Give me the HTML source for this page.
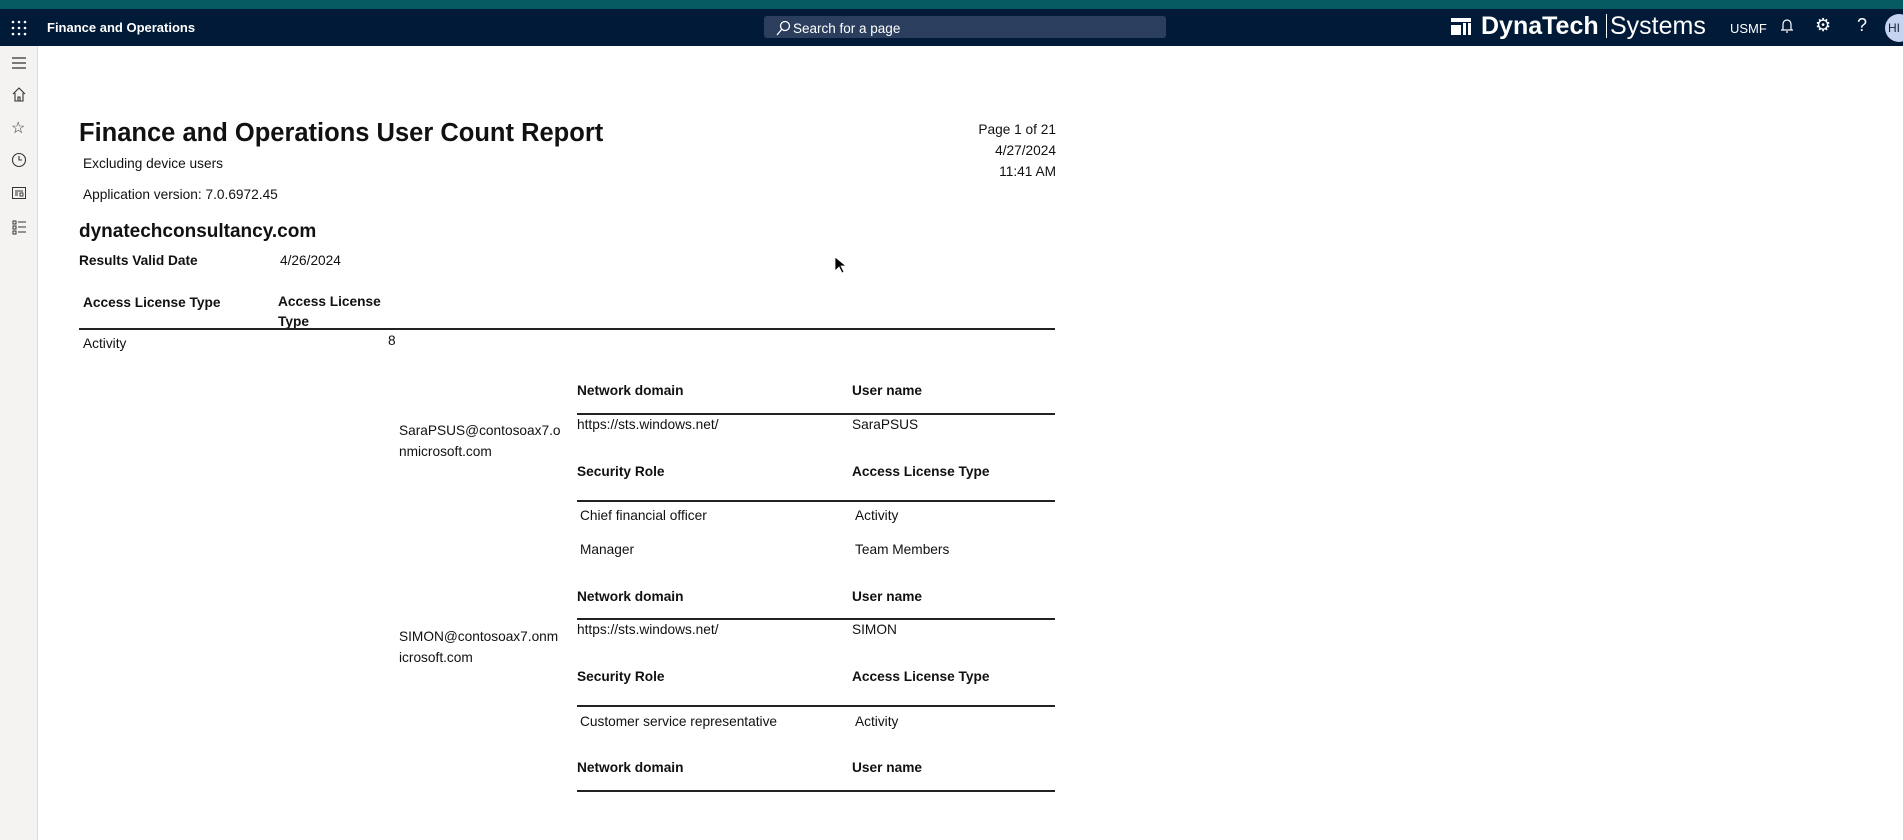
<!DOCTYPE html>
<html><head><meta charset="utf-8"><style>
*{margin:0;padding:0;box-sizing:border-box}
body{width:1903px;height:840px;overflow:hidden;background:#fff;font-family:"Liberation Sans",sans-serif;color:#111;position:relative}
.a{position:absolute;white-space:nowrap}
.t{font-size:13.7px}
.b{font-weight:bold;font-size:13.7px}
.ln{position:absolute;height:2px;background:#222}
.ic{position:absolute;left:11px;width:16px;height:16px}
</style></head><body>
<div class="a" style="left:0;top:0;width:1903px;height:9px;background:#065a61"></div>
<div class="a" style="left:0;top:9px;width:1903px;height:37px;background:#001a38"></div>
<svg class="a" style="left:11px;top:20px" width="16" height="16"><g fill="#fff"><circle cx="2" cy="2" r="1.3"/><circle cx="8" cy="2" r="1.3"/><circle cx="14" cy="2" r="1.3"/><circle cx="2" cy="8" r="1.3"/><circle cx="8" cy="8" r="1.3"/><circle cx="14" cy="8" r="1.3"/><circle cx="2" cy="14" r="1.3"/><circle cx="8" cy="14" r="1.3"/><circle cx="14" cy="14" r="1.3"/></g></svg>
<div class="a" style="left:47px;top:20px;color:#fff;font-weight:bold;font-size:13px">Finance and Operations</div>
<div class="a" style="left:764px;top:16px;width:402px;height:22px;background:#2c3e5e;border-radius:3px"></div>
<svg class="a" style="left:775px;top:20px" width="16" height="16"><circle cx="10" cy="6" r="4.5" fill="none" stroke="#fff" stroke-width="1.3"/><path d="M7 9L2 15" stroke="#fff" stroke-width="1.3"/></svg>
<div class="a" style="left:793px;top:21px;color:#fff;font-size:13.5px">Search for a page</div>
<svg class="a" style="left:1450px;top:15px" width="22" height="22"><rect x="1" y="3" width="20" height="4" fill="#fff"/><rect x="1" y="10" width="10" height="10" fill="#fff"/><rect x="13" y="8" width="3" height="12" fill="#fff"/><rect x="18" y="8" width="3" height="12" fill="#fff"/></svg>
<div class="a" style="left:1481px;top:12px;color:#fff;font-weight:bold;font-size:25px">DynaTech</div>
<div class="a" style="left:1606px;top:14px;width:1px;height:24px;background:#fff"></div>
<div class="a" style="left:1610px;top:12px;color:#fff;font-size:25px">Systems</div>
<div class="a" style="left:1730px;top:21px;color:#fff;font-size:13px">USMF</div>
<svg class="a" style="left:1780px;top:18px" width="14" height="16"><path d="M3 12V6a4 4 0 0 1 8 0v6zM1 12h12M6 14h2" fill="none" stroke="#fff" stroke-width="1.2"/></svg>
<div class="a" style="left:1815px;top:15px;color:#fff;font-size:18px">⚙</div>
<div class="a" style="left:1857px;top:15px;color:#fff;font-size:18px">?</div>
<div class="a" style="left:1885px;top:14px;width:28px;height:28px;border-radius:50%;background:#c5d3f0;color:#123;font-size:12px;line-height:28px;padding-left:3px">HI</div>
<div class="a" style="left:0;top:46px;width:38px;height:794px;background:#f4f3f2;border-right:1px solid #ddd"></div>
<svg class="ic" style="top:55px"><path d="M1 3h14M1 8h14M1 13h14" stroke="#333" stroke-width="1.2"/></svg>
<svg class="ic" style="top:86px"><path d="M2 8L8 2l6 6M4 7v8h8V7M7 15v-4h2v4" fill="none" stroke="#333" stroke-width="1.1"/></svg>
<div class="a" style="left:11px;top:118px;font-size:16px;color:#333">☆</div>
<svg class="ic" style="top:152px"><circle cx="8" cy="8" r="6.5" fill="none" stroke="#333" stroke-width="1.1"/><path d="M8 4v4h3" fill="none" stroke="#333" stroke-width="1.1"/></svg>
<svg class="ic" style="top:185px"><rect x="1.5" y="2.5" width="13" height="11" fill="none" stroke="#333"/><path d="M4 6h8M4 8h3M4 10h3M9 8h3v3H9z" fill="none" stroke="#333" stroke-width=".9"/></svg>
<svg class="ic" style="top:219px"><path d="M2 2h3v3H2zM2 7h3v3H2zM2 12h3v3H2zM7 3h8M7 8h8M7 13h8" fill="none" stroke="#333" stroke-width="1"/></svg>

<div class="a" style="left:79px;top:119px;font-size:25.5px;font-weight:bold">Finance and Operations User Count Report</div>
<div class="a t" style="left:83px;top:156px">Excluding device users</div>
<div class="a t" style="left:83px;top:187px">Application version: 7.0.6972.45</div>
<div class="a" style="left:79px;top:221px;font-size:19px;font-weight:bold">dynatechconsultancy.com</div>
<div class="a b" style="left:79px;top:253px">Results Valid Date</div>
<div class="a t" style="left:280px;top:253px">4/26/2024</div>
<div class="a t" style="right:847px;top:119px;text-align:right;line-height:21px">Page 1 of 21<br>4/27/2024<br>11:41 AM</div>
<div class="a b" style="left:83px;top:295px">Access License Type</div>
<div class="a b" style="left:278px;top:292px;line-height:20px">Access License<br>Type</div>
<div class="ln" style="left:79px;top:328px;width:976px"></div>
<div class="a t" style="left:83px;top:336px">Activity</div>
<div class="a t" style="left:388px;top:333px">8</div>

<div class="a b" style="left:577px;top:383px">Network domain</div>
<div class="a b" style="left:852px;top:383px">User name</div>
<div class="ln" style="left:577px;top:413px;width:478px"></div>
<div class="a t" style="left:577px;top:417px">https://sts.windows.net/</div>
<div class="a t" style="left:852px;top:417px">SaraPSUS</div>
<div class="a t" style="left:399px;top:420px;line-height:21px">SaraPSUS@contosoax7.o<br>nmicrosoft.com</div>
<div class="a b" style="left:577px;top:464px">Security Role</div>
<div class="a b" style="left:852px;top:464px">Access License Type</div>
<div class="ln" style="left:577px;top:500px;width:478px"></div>
<div class="a t" style="left:580px;top:508px">Chief financial officer</div>
<div class="a t" style="left:855px;top:508px">Activity</div>
<div class="a t" style="left:580px;top:542px">Manager</div>
<div class="a t" style="left:855px;top:542px">Team Members</div>

<div class="a b" style="left:577px;top:589px">Network domain</div>
<div class="a b" style="left:852px;top:589px">User name</div>
<div class="ln" style="left:577px;top:618px;width:478px"></div>
<div class="a t" style="left:577px;top:622px">https://sts.windows.net/</div>
<div class="a t" style="left:852px;top:622px">SIMON</div>
<div class="a t" style="left:399px;top:626px;line-height:21px">SIMON@contosoax7.onm<br>icrosoft.com</div>
<div class="a b" style="left:577px;top:669px">Security Role</div>
<div class="a b" style="left:852px;top:669px">Access License Type</div>
<div class="ln" style="left:577px;top:705px;width:478px"></div>
<div class="a t" style="left:580px;top:714px">Customer service representative</div>
<div class="a t" style="left:855px;top:714px">Activity</div>
<div class="a b" style="left:577px;top:760px">Network domain</div>
<div class="a b" style="left:852px;top:760px">User name</div>
<div class="ln" style="left:577px;top:790px;width:478px"></div>
<svg class="a" style="left:834px;top:256px" width="12" height="18"><path d="M1 1v14l4-4 3 6 2-1-3-6h5z" fill="#000" stroke="#fff" stroke-width=".8"/></svg>
</body></html>
